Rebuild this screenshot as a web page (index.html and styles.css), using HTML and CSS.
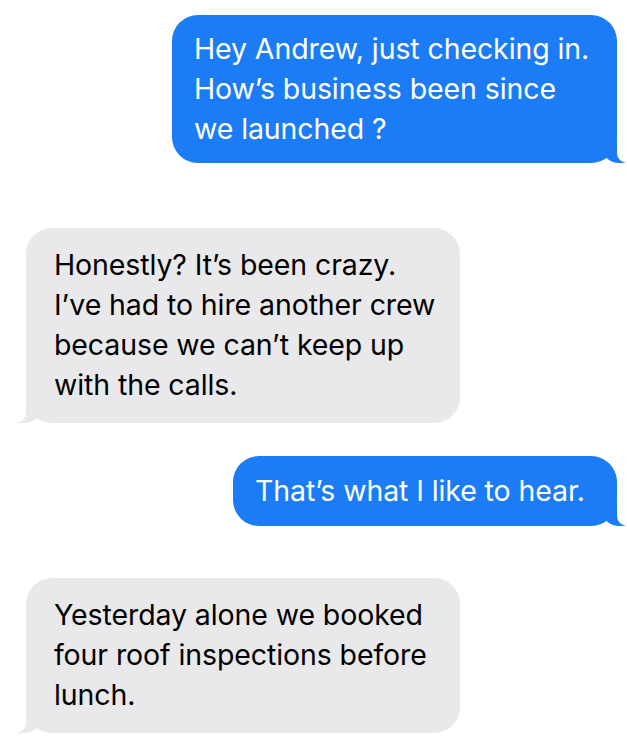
FILE: index.html
```html
<!DOCTYPE html>
<html lang="en">
<head>
    <meta charset="UTF-8">
    <meta name="viewport" content="width=device-width, initial-scale=1.0">
    <title>Messages</title>
    <link rel="stylesheet" href="styles.css">
</head>
<body>
    <div class="thread">
        <div class="bubble sent first">
            Hey Andrew, just checking in.<br>
            How’s business been since<br>
            we launched ?
        </div>

        <div class="bubble received second">
            Honestly? It’s been crazy.<br>
            I’ve had to hire another crew<br>
            because we can’t keep up<br>
            with the calls.
        </div>

        <div class="bubble sent third">
            That’s what I like to hear.
        </div>

        <div class="bubble received fourth">
            Yesterday alone we booked<br>
            four roof inspections before<br>
            lunch.
        </div>
    </div>
</body>
</html>
```

FILE: styles.css
```css
* {
    box-sizing: border-box;
}

body {
    margin: 0;
    background-color: #ffffff;
    font-family: 'Inter', 'Liberation Sans', sans-serif;
}

.thread {
    display: flex;
    flex-direction: column;
    padding: 15px 10px 0 26px;
}

.bubble {
    position: relative;
    font-size: 28.5px;
    line-height: 40px;
    letter-spacing: -0.1px;
    border-radius: 26px;
    padding: 14px 16px 14px 22px;
    white-space: nowrap;
}

.sent {
    align-self: flex-end;
    background-color: #1b7cf5;
    color: #ffffff;
}

.received {
    align-self: flex-start;
    background-color: #e9e9eb;
    color: #000000;
    padding-left: 28px;
}

/* tails */
.bubble::before,
.bubble::after {
    content: "";
    position: absolute;
    bottom: 0;
    height: 24px;
}

.sent::before {
    right: -8px;
    width: 22px;
    background-color: #1b7cf5;
    border-bottom-left-radius: 16px 14px;
}

.sent::after {
    right: -26px;
    width: 26px;
    background-color: #ffffff;
    border-bottom-left-radius: 10px;
}

.received::before {
    left: -8px;
    width: 22px;
    background-color: #e9e9eb;
    border-bottom-right-radius: 16px 14px;
}

.received::after {
    left: -26px;
    width: 26px;
    background-color: #ffffff;
    border-bottom-right-radius: 10px;
}

.first {
    width: 445px;
}

.second {
    width: 434px;
    margin-top: 65px;
    padding-top: 17px;
    padding-bottom: 18px;
}

.third {
    width: 384px;
    margin-top: 33px;
    padding-top: 15px;
    padding-bottom: 15px;
}

.fourth {
    width: 434px;
    margin-top: 52px;
    padding-top: 17px;
    padding-bottom: 18px;
}
```
